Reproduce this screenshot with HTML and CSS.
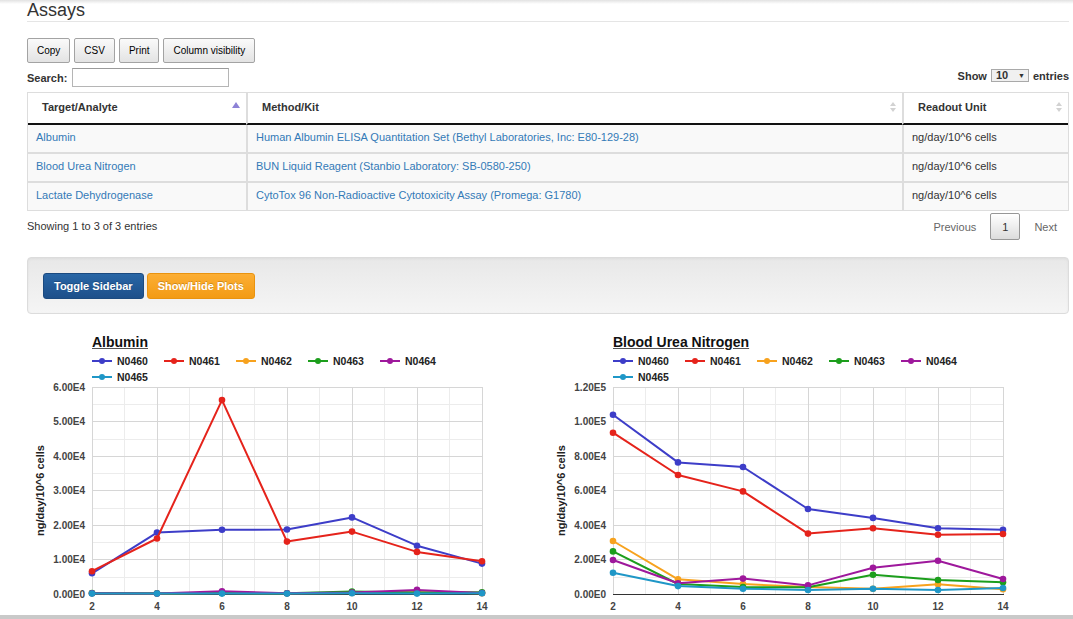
FILE: index.html
```html
<!DOCTYPE html>
<html>
<head>
<meta charset="utf-8">
<title>Assays</title>
<link rel="stylesheet" href="styles.css">
</head>
<body>
<div class="page">
  <h2 class="title">Assays</h2>
  <div class="dt-buttons">
    <button class="btn-dt">Copy</button>
    <button class="btn-dt">CSV</button>
    <button class="btn-dt">Print</button>
    <button class="btn-dt">Column visibility</button>
  </div>
  <div class="dt-top">
    <label class="search">Search:<input type="text"></label>
    <div class="length">Show <span class="select">10<span class="caret">&#9660;</span></span> entries</div>
  </div>
  <table class="dt">
    <colgroup><col class="c1"><col class="c2"><col class="c3"></colgroup>
    <thead>
      <tr>
        <th><div class="th-in"><span>Target/Analyte</span><svg class="sort-asc" width="8" height="6" viewBox="0 0 8 6"><path d="M4 0L8 6H0Z"/></svg></div></th>
        <th><div class="th-in"><span>Method/Kit</span><svg class="sort-both" width="6" height="10" viewBox="0 0 6 10"><path d="M3 0L6 4H0ZM3 10L0 6H6Z"/></svg></div></th>
        <th><div class="th-in"><span>Readout Unit</span><svg class="sort-both" width="6" height="10" viewBox="0 0 6 10"><path d="M3 0L6 4H0ZM3 10L0 6H6Z"/></svg></div></th>
      </tr>
    </thead>
    <tbody>
      <tr><td><a href="#">Albumin</a></td><td><a href="#">Human Albumin ELISA Quantitation Set (Bethyl Laboratories, Inc: E80-129-28)</a></td><td>ng/day/10^6 cells</td></tr>
      <tr><td><a href="#">Blood Urea Nitrogen</a></td><td><a href="#">BUN Liquid Reagent (Stanbio Laboratory: SB-0580-250)</a></td><td>ng/day/10^6 cells</td></tr>
      <tr><td><a href="#">Lactate Dehydrogenase</a></td><td><a href="#">CytoTox 96 Non-Radioactive Cytotoxicity Assay (Promega: G1780)</a></td><td>ng/day/10^6 cells</td></tr>
    </tbody>
  </table>
  <div class="dt-bottom">
    <div class="info">Showing 1 to 3 of 3 entries</div>
    <div class="paginate">
      <span class="pb">Previous</span>
      <span class="pb current">1</span>
      <span class="pb">Next</span>
    </div>
  </div>
  <div class="well">
    <button class="btn btn-primary">Toggle Sidebar</button>
    <button class="btn btn-warning">Show/Hide Plots</button>
  </div>

  <div class="charts">
    <div class="chart">
      <div class="chart-head">
        <div class="chart-title">Albumin</div>
        <div class="legend">
          <div class="li"><svg class="sw k0" viewBox="0 0 20 8"><line x1="0" y1="4" x2="20" y2="4"/><circle cx="10" cy="4" r="3"/></svg>N0460</div>
          <div class="li"><svg class="sw k1" viewBox="0 0 20 8"><line x1="0" y1="4" x2="20" y2="4"/><circle cx="10" cy="4" r="3"/></svg>N0461</div>
          <div class="li"><svg class="sw k2" viewBox="0 0 20 8"><line x1="0" y1="4" x2="20" y2="4"/><circle cx="10" cy="4" r="3"/></svg>N0462</div>
          <div class="li"><svg class="sw k3" viewBox="0 0 20 8"><line x1="0" y1="4" x2="20" y2="4"/><circle cx="10" cy="4" r="3"/></svg>N0463</div>
          <div class="li"><svg class="sw k4" viewBox="0 0 20 8"><line x1="0" y1="4" x2="20" y2="4"/><circle cx="10" cy="4" r="3"/></svg>N0464</div>
          <div class="li"><svg class="sw k5" viewBox="0 0 20 8"><line x1="0" y1="4" x2="20" y2="4"/><circle cx="10" cy="4" r="3"/></svg>N0465</div>
        </div>
      </div>
      <svg class="plot" width="521" height="230" viewBox="0 2 521 230">
        <defs>
          <marker id="m0" viewBox="0 0 8 8" refX="4" refY="4" markerWidth="8" markerHeight="8" markerUnits="userSpaceOnUse"><circle cx="4" cy="4" r="3.3" fill="#3d3dc8"/></marker>
          <marker id="m1" viewBox="0 0 8 8" refX="4" refY="4" markerWidth="8" markerHeight="8" markerUnits="userSpaceOnUse"><circle cx="4" cy="4" r="3.3" fill="#e5231b"/></marker>
          <marker id="m2" viewBox="0 0 8 8" refX="4" refY="4" markerWidth="8" markerHeight="8" markerUnits="userSpaceOnUse"><circle cx="4" cy="4" r="3.3" fill="#f7a21e"/></marker>
          <marker id="m3" viewBox="0 0 8 8" refX="4" refY="4" markerWidth="8" markerHeight="8" markerUnits="userSpaceOnUse"><circle cx="4" cy="4" r="3.3" fill="#1c9e1c"/></marker>
          <marker id="m4" viewBox="0 0 8 8" refX="4" refY="4" markerWidth="8" markerHeight="8" markerUnits="userSpaceOnUse"><circle cx="4" cy="4" r="3.3" fill="#9e189c"/></marker>
          <marker id="m5" viewBox="0 0 8 8" refX="4" refY="4" markerWidth="8" markerHeight="8" markerUnits="userSpaceOnUse"><circle cx="4" cy="4" r="3.3" fill="#1f97c7"/></marker>
        </defs>
        <path class="grid-minor" d="M97.5 4V211M162.5 4V211M227.5 4V211M292.5 4V211M357.5 4V211M422.5 4V211M65 21.5H455M65 56.5H455M65 90.5H455M65 125.5H455M65 159.5H455M65 194.5H455"/>
        <path class="grid-major" d="M65.5 4V211M130.5 4V211M195.5 4V211M260.5 4V211M325.5 4V211M390.5 4V211M455.5 4V211M65 4.5H456M65 38.5H456M65 73.5H456M65 107.5H456M65 142.5H456M65 176.5H456"/>
        <path class="axis" d="M65 211.5H456"/>
        <g class="ylab">
          <text x="58" y="7.6">6.00E4</text>
          <text x="58" y="42">5.00E4</text>
          <text x="58" y="76.6">4.00E4</text>
          <text x="58" y="111">3.00E4</text>
          <text x="58" y="145.6">2.00E4</text>
          <text x="58" y="180">1.00E4</text>
          <text x="58" y="214.6">0.00E0</text>
        </g>
        <g class="xlab">
          <text x="65" y="227">2</text>
          <text x="130" y="227">4</text>
          <text x="195" y="227">6</text>
          <text x="260" y="227">8</text>
          <text x="325" y="227">10</text>
          <text x="390" y="227">12</text>
          <text x="455" y="227">14</text>
        </g>
        <text class="ytitle" transform="translate(17,107.5) rotate(-90)">ng/day/10^6 cells</text>
        <polyline class="s0" points="65,190.3 130,149.6 195,146.8 260,146.5 325,134.4 390,162.7 455,180.6"/>
        <polyline class="s1" points="65,188.2 130,155.5 195,17.1 260,158.6 325,148.6 390,168.9 455,178.2"/>
        <polyline class="s2" points="65,210.3 130,210.6 195,210 260,210.3 325,210 390,209.3 455,210.3"/>
        <polyline class="s3" points="65,210 130,210.3 195,210 260,210.3 325,208.6 390,209.6 455,209.3"/>
        <polyline class="s4" points="65,210.3 130,210.6 195,208.2 260,210.3 325,209.6 390,206.9 455,210"/>
        <polyline class="s5" points="65,210.6 130,210.6 195,210.6 260,210.6 325,210.3 390,210.6 455,210.3"/>
      </svg>
    </div>

    <div class="chart">
      <div class="chart-head">
        <div class="chart-title">Blood Urea Nitrogen</div>
        <div class="legend">
          <div class="li"><svg class="sw k0" viewBox="0 0 20 8"><line x1="0" y1="4" x2="20" y2="4"/><circle cx="10" cy="4" r="3"/></svg>N0460</div>
          <div class="li"><svg class="sw k1" viewBox="0 0 20 8"><line x1="0" y1="4" x2="20" y2="4"/><circle cx="10" cy="4" r="3"/></svg>N0461</div>
          <div class="li"><svg class="sw k2" viewBox="0 0 20 8"><line x1="0" y1="4" x2="20" y2="4"/><circle cx="10" cy="4" r="3"/></svg>N0462</div>
          <div class="li"><svg class="sw k3" viewBox="0 0 20 8"><line x1="0" y1="4" x2="20" y2="4"/><circle cx="10" cy="4" r="3"/></svg>N0463</div>
          <div class="li"><svg class="sw k4" viewBox="0 0 20 8"><line x1="0" y1="4" x2="20" y2="4"/><circle cx="10" cy="4" r="3"/></svg>N0464</div>
          <div class="li"><svg class="sw k5" viewBox="0 0 20 8"><line x1="0" y1="4" x2="20" y2="4"/><circle cx="10" cy="4" r="3"/></svg>N0465</div>
        </div>
      </div>
      <svg class="plot" width="521" height="230" viewBox="0 2 521 230">
        <path class="grid-minor" d="M97.5 4V211M162.5 4V211M227.5 4V211M292.5 4V211M357.5 4V211M422.5 4V211M65 21.5H455M65 56.5H455M65 90.5H455M65 125.5H455M65 159.5H455M65 194.5H455"/>
        <path class="grid-major" d="M65.5 4V211M130.5 4V211M195.5 4V211M260.5 4V211M325.5 4V211M390.5 4V211M455.5 4V211M65 4.5H456M65 38.5H456M65 73.5H456M65 107.5H456M65 142.5H456M65 176.5H456"/>
        <path class="axis" d="M65 211.5H456"/>
        <g class="ylab">
          <text x="58" y="7.6">1.20E5</text>
          <text x="58" y="42">1.00E5</text>
          <text x="58" y="76.6">8.00E4</text>
          <text x="58" y="111">6.00E4</text>
          <text x="58" y="145.6">4.00E4</text>
          <text x="58" y="180">2.00E4</text>
          <text x="58" y="214.6">0.00E0</text>
        </g>
        <g class="xlab">
          <text x="65" y="227">2</text>
          <text x="130" y="227">4</text>
          <text x="195" y="227">6</text>
          <text x="260" y="227">8</text>
          <text x="325" y="227">10</text>
          <text x="390" y="227">12</text>
          <text x="455" y="227">14</text>
        </g>
        <text class="ytitle" transform="translate(17,107.5) rotate(-90)">ng/day/10^6 cells</text>
        <polyline class="s0" points="65,31.8 130,79.4 195,84 260,126 325,134.9 390,145.3 455,146.7"/>
        <polyline class="s1" points="65,49.7 130,92 195,108.4 260,150.6 325,145.3 390,151.7 455,151"/>
        <polyline class="s2" points="65,158 130,196.3 195,201 260,204.1 325,205.7 390,201.3 455,206.3"/>
        <polyline class="s3" points="65,168.4 130,201 195,204.1 260,204.3 325,191.7 390,197 455,199.3"/>
        <polyline class="s4" points="65,177 130,200.3 195,195.6 260,202.4 325,184.8 390,177.7 455,196"/>
        <polyline class="s5" points="65,189.8 130,203.1 195,205.7 260,207 325,205.7 390,207 455,205"/>
      </svg>
    </div>
  </div>
</div>
<div class="hbar"></div>
</body>
</html>
```

FILE: styles.css
```css
* { box-sizing: border-box; }

html, body {
  margin: 0;
  padding: 0;
}

body {
  font-family: "Liberation Sans", Arial, sans-serif;
  font-size: 11px;
  color: #333;
  background: #fff linear-gradient(#e2e2e2, #fff 4px) no-repeat;
  overflow: hidden;
}

.page {
  padding: 0 4px 0 27px;
  width: 1073px;
}

.title {
  margin: 0;
  font-size: 18px;
  font-weight: normal;
  line-height: 21px;
  color: #333;
  border-bottom: 1px solid #e5e5e5;
}

/* DataTables buttons */
.dt-buttons {
  display: flex;
  gap: 4px;
  margin-top: 16px;
}

.btn-dt {
  height: 25px;
  padding: 0 9px;
  font-family: "Liberation Sans", Arial, sans-serif;
  font-size: 10px;
  color: #000;
  border: 1px solid #a3a3a3;
  border-radius: 2px;
  background: linear-gradient(#fafafa, #e3e3e3);
}

.dt-top {
  display: flex;
  justify-content: space-between;
  align-items: flex-start;
  margin-top: 5px;
  height: 20px;
}

.search {
  display: flex;
  align-items: center;
  font-weight: bold;
  font-size: 11px;
}

.search input {
  width: 157px;
  height: 19px;
  margin: 0 0 0 5px;
  padding: 0 2px;
  border: 1px solid #b5b5b5;
  border-top-color: #9a9a9a;
}

.length {
  display: flex;
  align-items: center;
  gap: 4px;
  margin-top: 1px;
  font-weight: bold;
  font-size: 11px;
}

.select {
  display: flex;
  align-items: center;
  justify-content: space-between;
  width: 38px;
  height: 13px;
  padding: 0 3px 0 4px;
  border: 1px solid #a9a9a9;
  background: #f0f0f0;
  font-size: 11px;
  line-height: 11px;
}

.caret {
  font-size: 7px;
}

/* table */
.dt {
  width: 1042px;
  margin-top: 4px;
  border-collapse: separate;
  border-spacing: 0;
  table-layout: fixed;
  border: 1px solid #ddd;
}

.c1 { width: 218px; }
.c2 { width: 656px; }
.c3 { width: 166px; }

.dt th {
  text-align: left;
  font-weight: bold;
  font-size: 11px;
  line-height: 13px;
  padding: 8px 6px 9px 14px;
  border-bottom: 2px solid #111;
  border-left: 2px solid #ddd;
  background: #fff;
}

.dt th:first-child,
.dt td:first-child {
  border-left: none;
}

.th-in {
  display: flex;
  justify-content: space-between;
  align-items: center;
}

.sort-asc {
  fill: #8d82d6;
  margin-top: -5px;
}

.sort-both {
  fill: #d2d2d2;
  margin-top: -2px;
}

.dt td {
  font-size: 11px;
  line-height: 13px;
  padding: 6px 8px 8px;
  border-left: 2px solid #ddd;
  border-bottom: 2px solid #ddd;
  background: #f9f9f9;
  white-space: nowrap;
  overflow: hidden;
}

.dt tr:last-child td {
  border-bottom: none;
}

.dt a {
  color: #337ab7;
  text-decoration: none;
}

.dt-bottom {
  display: flex;
  justify-content: space-between;
  align-items: center;
  margin-top: 2px;
}

.info {
  font-size: 11px;
  margin-top: -1px;
}

.paginate {
  display: flex;
}

.pb {
  padding: 5.5px 11px;
  margin-left: 2px;
  line-height: 14px;
  border: 1px solid transparent;
  border-radius: 2px;
  color: #666;
  font-size: 11px;
}

.pb.current {
  color: #333;
  border-color: #979797;
  background: linear-gradient(#fff, #dcdcdc);
}

/* well */
.well {
  display: flex;
  gap: 3px;
  margin-top: 17px;
  padding: 15px 15px 14px;
  border: 1px solid #dcdcdc;
  border-radius: 4px;
  background: linear-gradient(#e8e8e8, #f5f5f5);
  box-shadow: inset 0 1px 3px rgba(0, 0, 0, 0.05);
}

.btn {
  height: 26px;
  padding: 0 10px;
  font-family: "Liberation Sans", Arial, sans-serif;
  font-size: 11px;
  font-weight: bold;
  color: #fff;
  border-radius: 3px;
  border: 1px solid;
  text-shadow: 0 -1px 0 rgba(0, 0, 0, 0.2);
}

.btn-primary {
  background: linear-gradient(#2966a6, #1d4f8a);
  border-color: #1b4a80;
}

.btn-warning {
  background: linear-gradient(#fcae34, #f39b14);
  border-color: #e9930f;
}

/* charts */
.charts {
  display: flex;
  margin-top: 20px;
}

.chart {
  width: 521px;
}

.chart-head {
  padding-left: 65px;
}

.chart-title {
  font-size: 14px;
  font-weight: bold;
  line-height: 16px;
  color: #111;
  text-decoration: underline;
  text-decoration-color: #555;
}

.legend {
  display: flex;
  flex-wrap: wrap;
  width: 390px;
  margin-top: 3px;
}

.li {
  display: flex;
  align-items: center;
  width: 72px;
  height: 16px;
  font-size: 10.5px;
  font-weight: bold;
  color: #222;
}

.sw {
  width: 20px;
  height: 8px;
  margin-right: 5px;
}

.sw line { stroke: currentColor; stroke-width: 2; }
.sw circle { fill: currentColor; }

.k0 { color: #3d3dc8; }
.k1 { color: #e5231b; }
.k2 { color: #f7a21e; }
.k3 { color: #1c9e1c; }
.k4 { color: #9e189c; }
.k5 { color: #1f97c7; }

.plot {
  display: block;
  overflow: visible;
}

.grid-minor {
  stroke: #ececec;
  stroke-width: 1;
  fill: none;
}

.grid-major {
  stroke: #d6d6d6;
  stroke-width: 1;
  fill: none;
}

.axis {
  stroke: #333;
  stroke-width: 1;
  fill: none;
}

.ylab text {
  font-family: "Liberation Sans", Arial, sans-serif;
  font-size: 10px;
  font-weight: bold;
  fill: #444;
  text-anchor: end;
}

.xlab text {
  font-family: "Liberation Sans", Arial, sans-serif;
  font-size: 10px;
  font-weight: bold;
  fill: #444;
  text-anchor: middle;
}

.ytitle {
  font-family: "Liberation Sans", Arial, sans-serif;
  font-size: 11px;
  font-weight: bold;
  fill: #222;
  text-anchor: middle;
}

.plot polyline {
  fill: none;
  stroke-width: 2;
  stroke-linejoin: round;
}

.s0 { stroke: #3d3dc8; marker: url(#m0); }
.s1 { stroke: #e5231b; marker: url(#m1); }
.s2 { stroke: #f7a21e; marker: url(#m2); }
.s3 { stroke: #1c9e1c; marker: url(#m3); }
.s4 { stroke: #9e189c; marker: url(#m4); }
.s5 { stroke: #1f97c7; marker: url(#m5); }

.hbar {
  height: 10px;
  background: #c9c9c9;
}
```
